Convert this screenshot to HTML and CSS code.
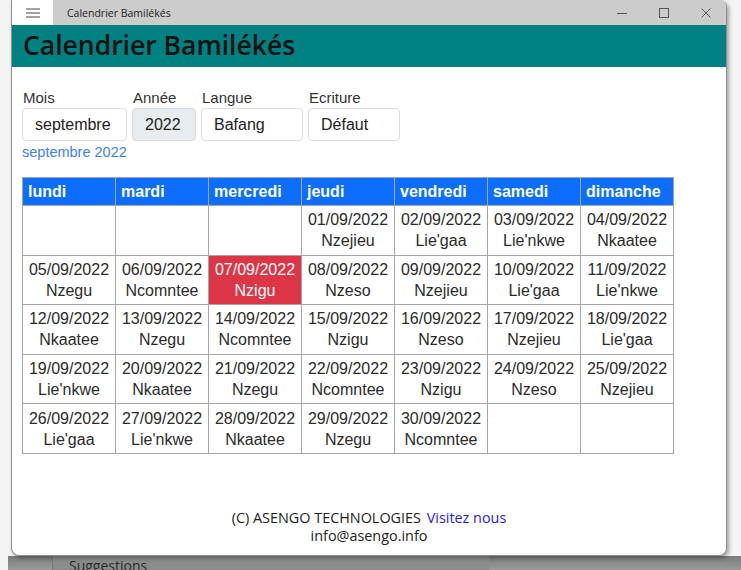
FILE: index.html
```html
<!DOCTYPE html>
<html lang="fr">
<head>
    <meta charset="UTF-8">
    <meta name="viewport" content="width=device-width, initial-scale=1.0">
    <title>Calendrier Bamilékés</title>
    <link rel="stylesheet" href="styles.css">
</head>
<body>
    <div class="window">
        <div class="titlebar">
            <div class="menu-btn">
                <svg width="14" height="10" viewBox="0 0 14 10"><path d="M0 1h14M0 5h14M0 9h14" stroke="#444" stroke-width="1"/></svg>
            </div>
            <span class="app-title">Calendrier Bamilékés</span>
            <div class="controls">
                <svg width="10" height="10" viewBox="0 0 10 10"><path d="M0 5.5h10" stroke="#555" stroke-width="1"/></svg>
                <svg width="10" height="10" viewBox="0 0 10 10"><rect x="0.5" y="0.5" width="9" height="9" fill="none" stroke="#555" stroke-width="1"/></svg>
                <svg width="10" height="10" viewBox="0 0 10 10"><path d="M0.5 0.5l9 9M9.5 0.5l-9 9" stroke="#555" stroke-width="1"/></svg>
            </div>
        </div>

        <header class="app-header">
            <h1>Calendrier Bamilékés</h1>
        </header>

        <main class="content">
            <div class="filters">
                <div class="field">
                    <label>Mois</label>
                    <div class="select w-mois">septembre</div>
                </div>
                <div class="field">
                    <label>Année</label>
                    <div class="select w-annee readonly">2022</div>
                </div>
                <div class="field">
                    <label>Langue</label>
                    <div class="select w-langue">Bafang</div>
                </div>
                <div class="field">
                    <label>Ecriture</label>
                    <div class="select w-ecriture">Défaut</div>
                </div>
            </div>
            <div class="current">septembre 2022</div>

            <table class="calendar">
                <thead>
                    <tr>
                        <th>lundi</th><th>mardi</th><th>mercredi</th><th>jeudi</th><th>vendredi</th><th>samedi</th><th>dimanche</th>
                    </tr>
                </thead>
                <tbody id="calBody"></tbody>
            </table>
        </main>

        <footer class="footer">
            <div>(C) ASENGO TECHNOLOGIES <a href="#">Visitez nous</a></div>
            <div>info@asengo.info</div>
        </footer>
    </div>

    <div class="behind">
        <div class="behind-panel">Suggestions</div>
    </div>

    <script>
        const names = ['Nzejieu', "Lie'gaa", "Lie'nkwe", 'Nkaatee', 'Nzegu', 'Ncomntee', 'Nzigu', 'Nzeso'];
        const today = 7;
        const body = document.getElementById('calBody');

        // septembre 2022 commence un jeudi (3 cases vides)
        let cells = [null, null, null];
        for (let d = 1; d <= 30; d++) cells.push(d);
        while (cells.length % 7) cells.push(null);

        for (let i = 0; i < cells.length; i += 7) {
            const tr = document.createElement('tr');
            cells.slice(i, i + 7).forEach(d => {
                const td = document.createElement('td');
                if (d) {
                    const dd = String(d).padStart(2, '0');
                    td.innerHTML = `${dd}/09/2022<br>${names[(d - 1) % 8]}`;
                    if (d === today) td.className = 'today';
                }
                tr.appendChild(td);
            });
            body.appendChild(tr);
        }
    </script>
</body>
</html>
```

FILE: styles.css
```css
html, body {
    margin: 0;
    padding: 0;
}
body {
    width: 741px;
    height: 570px;
    overflow: hidden;
    background: #f4f4f4;
}
.window {
    margin-left: 11px;
    width: 716px;
    height: 556px;
    background: white;
    border: 1px solid #8f8f8f;
    border-top: none;
    border-radius: 0 8px 8px 8px;
    box-shadow: 2px 2px 4px rgba(0,0,0,0.35);
    display: flex;
    flex-direction: column;
    box-sizing: border-box;
    overflow: hidden;
    position: relative;
    z-index: 1;
}
.titlebar {
    height: 25px;
    background: #cccccc;
    display: flex;
    align-items: center;
    font-family: "Open Sans", "Noto Sans", sans-serif;
    flex-shrink: 0;
}
.menu-btn {
    width: 41px;
    height: 25px;
    background: white;
    display: flex;
    align-items: center;
    justify-content: center;
}
.app-title {
    margin-left: 14px;
    font-size: 10.5px;
    color: #222;
}
.controls {
    margin-left: auto;
    display: flex;
    gap: 32px;
    padding-right: 15px;
}
.app-header {
    height: 42px;
    background: #008080;
    flex-shrink: 0;
}
.app-header h1 {
    margin: 0;
    padding: 0 0 0 11px;
    font-family: "Open Sans", "Noto Sans", sans-serif;
    font-weight: 600;
    font-size: 26.5px;
    line-height: 40px;
    color: #111;
}
.content {
    flex: 1;
    padding: 21px 10px 0 10px;
    font-family: "Liberation Sans", Arial, sans-serif;
    color: #212529;
}
.filters {
    display: flex;
    gap: 5px;
}
.field {
    display: flex;
    flex-direction: column;
}
.field label {
    font-size: 15px;
    line-height: 20px;
    color: #333;
    padding-left: 1px;
}
.select {
    box-sizing: border-box;
    height: 33px;
    border: 1px solid #dcdcdc;
    border-radius: 4px;
    padding: 0 12px;
    font-size: 16px;
    line-height: 31px;
    color: #222;
}
.select.readonly {
    background: #e9ecef;
}
.w-mois { width: 105px; }
.w-annee { width: 64px; }
.w-langue { width: 102px; }
.w-ecriture { width: 92px; }
.current {
    margin-top: 3px;
    font-size: 14.5px;
    color: #3d7ff5;
}
.calendar {
    margin-top: 17px;
    border-collapse: collapse;
    table-layout: fixed;
    width: 652px;
}
.calendar th {
    background: #0d6efd;
    color: white;
    font-weight: bold;
    font-size: 16px;
    text-align: left;
    padding: 0 5px;
    height: 27px;
    border: 1px solid #a6a6a6;
}
.calendar td {
    border: 1px solid #a6a6a6;
    text-align: center;
    font-size: 16px;
    line-height: 21px;
    padding: 3px 2px;
    height: 42.6px;
    color: #2b2b2b;
    white-space: nowrap;
}
.calendar td.today {
    background: #dc3545;
    color: white;
}
.footer {
    font-family: "Open Sans", "Noto Sans", sans-serif;
    font-size: 14.4px;
    line-height: 18px;
    text-align: center;
    color: #222;
    padding-bottom: 10px;
}
.footer a {
    color: #1b1bef;
    text-decoration: none;
    margin-left: 2px;
}
.behind {
    height: 14px;
    background: linear-gradient(#7c7c7c, #9a9a9a);
    margin-left: 8px;
}
.behind-panel {
    margin-left: 44px;
    width: 420px;
    height: 14px;
    background: #8c8c8c;
    border-left: 1px solid #777;
    padding-left: 16px;
    font-family: "Open Sans", "Noto Sans", sans-serif;
    font-size: 14px;
    line-height: 20px;
    color: #2a2a2a;
    overflow: hidden;
}
```
